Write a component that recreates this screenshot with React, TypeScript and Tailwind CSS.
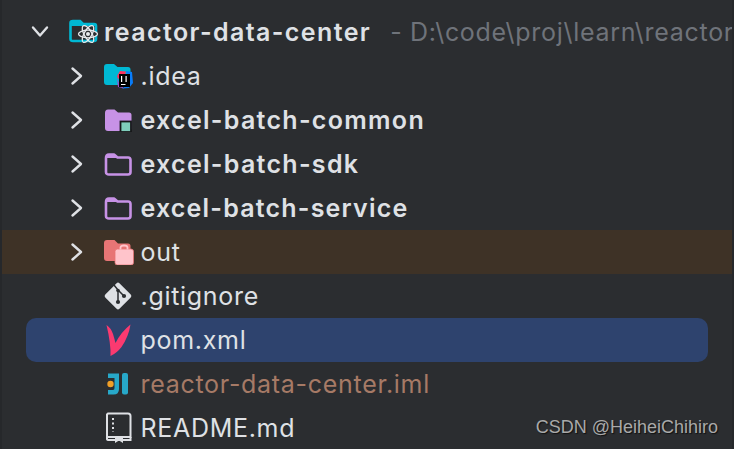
import { ReactNode } from "react";

function Chevron({ open }: { open?: boolean }) {
  return (
    <svg width="20" height="20" viewBox="0 0 20 20" fill="none" stroke="#dfe1e5" strokeWidth="2.4" strokeLinecap="round" strokeLinejoin="round">
      {open ? <path d="M3 5.500 L10 13.500 L17 5.500" /> : <path d="M4.500 2.500 L13 10 L4.500 17.500" />}
    </svg>
  );
}

function FolderPlain() {
  return (
    <svg width="28" height="24" viewBox="0 0 28 24" fill="none">
      <path d="M2 6 Q2 2.500 5 2.500 H10 L13.500 5.500 H24 Q26.500 5.500 26.500 8 V20 Q26.500 22.500 24 22.500 H5 Q2 22.500 2 20 Z" stroke="#c792e6" strokeWidth="2.600" strokeLinejoin="round" />
      <path d="M2 3 H10 L13.500 6 H2 Z" fill="#c792e6" />
    </svg>
  );
}

function FolderCommon() {
  return (
    <svg width="28" height="24" viewBox="0 0 28 24" fill="none">
      <path d="M1 5 Q1 1.500 4 1.500 H10.500 L14 4.500 H25 Q27.500 4.500 27.500 7 V20 Q27.500 23 25 23 H4 Q1 23 1 20 Z" fill="#c792e6" />
      <rect x="16.500" y="13.500" width="10.500" height="10.500" fill="#7fcdbb" stroke="#17181a" strokeWidth="1.800" />
    </svg>
  );
}

function FolderIdea() {
  return (
    <svg width="30" height="26" viewBox="0 0 30 26" fill="none">
      <path d="M0 4 Q0 1 3 1 H10 L13.500 4 H24 Q26.500 4 26.500 6.500 V19 Q26.500 22 24 22 H3 Q0 22 0 19 Z" fill="#00b8d4" />
      <path d="M13 13 L16 8 L22 8.500 L21 12 L14 16 Z" fill="#fe315d" />
      <path d="M13 15 L14 24 L20 25.500 L15 20 Z" fill="#9a4dc4" />
      <path d="M22 8 L28 9 L29 20 L25 25 L18 25.500 L25 21 Z" fill="#087cfa" />
      <rect x="15" y="11" width="11" height="13" fill="#000000" />
      <rect x="17" y="13" width="1.200" height="6" fill="#ffffff" />
      <rect x="21.500" y="13" width="1.200" height="6" fill="#ffffff" />
      <rect x="17" y="21" width="4.500" height="1" fill="#ffffff" />
    </svg>
  );
}

function FolderOut() {
  return (
    <svg width="30" height="26" viewBox="0 0 30 26" fill="none">
      <path d="M0 4 Q0 1 3 1 H10.500 L14 4.500 H24 Q26.500 4.500 26.500 7 V19 Q26.500 22 24 22 H3 Q0 22 0 19 Z" fill="#e77575" />
      <rect x="11" y="10" width="18.500" height="16" rx="2.500" fill="#ffc4cb" stroke="#e77575" strokeWidth="0.800" />
      <path d="M16.500 10.500 V8.500 Q16.500 6.500 20 6.500 Q23.500 6.500 23.500 8.500 V10.500" stroke="#ffc4cb" strokeWidth="1.800" />
    </svg>
  );
}

function ReactFolder() {
  return (
    <svg width="30" height="26" viewBox="0 0 30 26" fill="none">
      <path d="M1.500 4 Q1.500 2 4 2 H11 L14 5 H25 Q27 5 27 7 V20 Q27 22 25 22 H4 Q1.500 22 1.500 20 Z" stroke="#00b8d4" strokeWidth="2.600" />
      <path d="M1 7 H27 V5 H14 L11 2 H4 Q1 2 1 4 Z" fill="#00b8d4" />
      <g stroke="#e8eaed" strokeWidth="1.300" fill="#2b2d30">
        <ellipse cx="19" cy="15" rx="9.500" ry="3.800" />
        <ellipse cx="19" cy="15" rx="9.500" ry="3.800" transform="rotate(60 19 15)" fill="none" />
        <ellipse cx="19" cy="15" rx="9.500" ry="3.800" transform="rotate(120 19 15)" fill="none" />
      </g>
      <circle cx="19" cy="15" r="2" fill="#e8eaed" />
    </svg>
  );
}

function GitIcon() {
  return (
    <svg width="30" height="30" viewBox="0 0 30 30">
      <rect x="5" y="5" width="20" height="20" rx="2" fill="#dfe1e5" transform="rotate(45 15 15)" />
      <path d="M11 4 L15 9 V21 M15 9 L21 15" stroke="#2b2d30" strokeWidth="1.500" fill="none" />
      <circle cx="15" cy="21" r="2.100" fill="#2b2d30" />
      <circle cx="15" cy="9.500" r="1.800" fill="#2b2d30" />
      <circle cx="21" cy="15" r="2.100" fill="#2b2d30" />
    </svg>
  );
}

function MavenIcon() {
  return (
    <svg width="26" height="32" viewBox="0 0 26 32">
      <path d="M0.500 1 Q5 4 7 10 Q8.500 15 9.500 19 Q15 8 24.500 0.500 Q22.500 13 15.500 23 Q11 29 4.500 32 Q5 20 0.500 1 Z" fill="#fb3a70" />
    </svg>
  );
}

function ImlIcon() {
  return (
    <svg width="24" height="24" viewBox="0 0 24 24">
      <path d="M1 1.500 H12 V17 Q12 22.500 6.500 22.500 H1 V18 H6 Q7.500 18 7.500 16 V6 H1 Z" fill="#27a8c9" />
      <rect x="15" y="1" width="6" height="21.500" rx="2" fill="#27a8c9" />
      <circle cx="3.500" cy="12" r="3.200" fill="#ef9f27" />
    </svg>
  );
}

function BookIcon() {
  return (
    <svg width="26" height="32" viewBox="0 0 26 32" fill="none">
      <path d="M2 1.500 H22 Q24.500 1.500 24.500 4 V25 H1 V2.500 Z" stroke="#dfe1e5" strokeWidth="2" />
      <path d="M1 25 V27 Q1 28 3 28 H24.500 V25" stroke="#dfe1e5" strokeWidth="2" />
      <path d="M7 6 V20" stroke="#dfe1e5" strokeWidth="2" strokeDasharray="2 2.500" />
      <path d="M9 24 H17 V31 L13 28.500 L9 31 Z" fill="#dfe1e5" />
    </svg>
  );
}

type RowProps = {
  icon: ReactNode;
  children: ReactNode;
  chevron?: boolean;
  className?: string;
};

function Row({ icon, children, chevron, className }: RowProps) {
  return (
    <div className={"flex h-11 items-center " + (className ?? "")}>
      <div className="flex w-[104px] shrink-0 justify-start pl-[68px]">
        {chevron && <Chevron />}
      </div>
      <div className="flex w-[36.5px] shrink-0 items-center">{icon}</div>
      <div className="whitespace-nowrap pt-px tracking-[0.7px]">{children}</div>
    </div>
  );
}

export default function App() {
  return (
    <div className="relative h-[449px] w-[734px] overflow-hidden bg-[#2b2d30] pt-[10px] font-['Inter',sans-serif] text-[25px] text-[#dfe1e5]">
      <div className="flex h-11 items-center">
        <div className="w-[30px] shrink-0" />
        <div className="flex w-[39px] shrink-0"><Chevron open /></div>
        <div className="flex w-[35px] shrink-0 items-center"><ReactFolder /></div>
        <span className="whitespace-nowrap pt-px font-semibold tracking-[1.4px]">reactor-data-center</span>
        <span className="ml-[19px] whitespace-nowrap pt-px tracking-[0.7px] text-[#6f737a]">- D:\code\proj\learn\reactor</span>
      </div>
      <Row chevron icon={<FolderIdea />}>.idea</Row>
      <Row chevron icon={<FolderCommon />}><span className="font-semibold tracking-[1.3px]">excel-batch-common</span></Row>
      <Row chevron icon={<FolderPlain />}><span className="font-semibold tracking-[1.3px]">excel-batch-sdk</span></Row>
      <Row chevron icon={<FolderPlain />}><span className="font-semibold tracking-[1.2px]">excel-batch-service</span></Row>
      <Row chevron icon={<FolderOut />} className="bg-[#3e3226]">out</Row>
      <Row icon={<span className="-ml-px"><GitIcon /></span>}>.gitignore</Row>
      <div className="mx-[26px] w-[682px] rounded-[10px] bg-[#2e436e]">
        <div className="-ml-[26px] w-[734px]">
          <Row icon={<span className="ml-0.5"><MavenIcon /></span>}>pom.xml</Row>
        </div>
      </div>
      <Row icon={<span className="ml-[3px]"><ImlIcon /></span>}><span className="text-[#a67a66]">reactor-data-center.iml</span></Row>
      <Row icon={<span className="ml-0.5"><BookIcon /></span>}>README.md</Row>
      <div className="absolute bottom-[8px] right-[16px] font-['Liberation_Sans',sans-serif] text-[18px] text-[#a9a9a9] [text-shadow:1px_1px_1px_#111]">
        CSDN @HeiheiChihiro
      </div>
      <div className="absolute inset-y-0 left-0 w-[2px] bg-[#26282b]" />
      <div className="absolute inset-y-0 right-0 w-[2px] bg-[#26282b]" />
    </div>
  );
}
